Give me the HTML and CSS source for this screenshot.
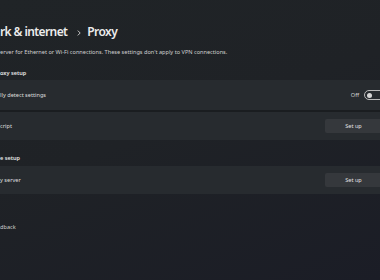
FILE: index.html
```html
<!DOCTYPE html>
<html lang="en">
<head>
    <meta charset="UTF-8">
    <title>Proxy</title>
    <link rel="stylesheet" href="styles.css">
</head>
<body>
    <div class="page">
        <h1 class="crumbs">
            <span>rk &amp; internet</span>
            <svg class="chevron" width="4" height="6" viewBox="0 0 4 6"><polyline points="0.8,0.6 3.2,3 0.8,5.4" fill="none" stroke="#c4c4c4" stroke-width="1"/></svg>
            <span>Proxy</span>
        </h1>
        <p class="desc">erver for Ethernet or Wi-Fi connections. These settings don't apply to VPN connections.</p>

        <h2 class="group">oxy setup</h2>
        <div class="card tall">
            <span class="label">lly detect settings</span>
            <div class="control">
                <span class="state">Off</span>
                <span class="toggle"><span class="knob"></span></span>
            </div>
        </div>
        <div class="card">
            <span class="label">cript</span>
            <button class="btn">Set up</button>
        </div>

        <h2 class="group second">e setup</h2>
        <div class="card">
            <span class="label">y server</span>
            <button class="btn">Set up</button>
        </div>

        <a class="feedback">dback</a>
    </div>
</body>
</html>
```

FILE: styles.css
```css
html, body {
    height: 100%;
}
body {
    margin: 0;
    overflow: hidden;
    background: linear-gradient(160deg, #202427 0%, #1f2226 45%, #1b1d26 100%);
    color: #dcdcdc;
    font-family: 'Noto Sans', 'Open Sans', sans-serif;
}
.page {
    margin-right: -20px;
    padding-top: 24px;
}
.crumbs {
    margin: 0;
    display: flex;
    align-items: center;
    height: 16px;
    font-size: 12px;
    line-height: 16px;
    font-weight: 600;
    color: #ececec;
    letter-spacing: -0.6px;
}
.chevron {
    margin: 1px 6px 0 10px;
}
.desc {
    margin: 8px 0 0;
    font-size: 5.6px;
    line-height: 8px;
    color: #cfcfcf;
}
.group {
    margin: 13px 0 3px;
    font-size: 5.6px;
    line-height: 8px;
    font-weight: 600;
    color: #e6e6e6;
}
.group.second {
    margin: 14px 0 4px;
}
.card {
    display: flex;
    align-items: center;
    justify-content: space-between;
    height: 28px;
    padding-right: 18px;
    background: #272b2f;
}
.card.tall {
    height: 30px;
    border-bottom: 2px solid #1a1d20;
}
.label {
    font-size: 5.6px;
    color: #dedede;
}
.control {
    display: flex;
    align-items: center;
    gap: 5px;
    margin-right: -4px;
}
.state {
    font-size: 5.6px;
    color: #d0d0d0;
}
.toggle {
    width: 16px;
    height: 8px;
    border: 1px solid #b9b9b9;
    border-radius: 6px;
    display: flex;
    align-items: center;
    padding: 0 2px;
}
.knob {
    width: 5px;
    height: 5px;
    border-radius: 50%;
    background: #d6d6d6;
}
.btn {
    width: 57px;
    height: 14px;
    border: 0;
    border-radius: 2px;
    background: #35383c;
    color: #e2e2e2;
    font-family: inherit;
    font-size: 5.6px;
    padding: 0;
}
.feedback {
    display: block;
    margin-top: 29px;
    font-size: 5.6px;
    line-height: 8px;
    color: #cfcfcf;
}
```
